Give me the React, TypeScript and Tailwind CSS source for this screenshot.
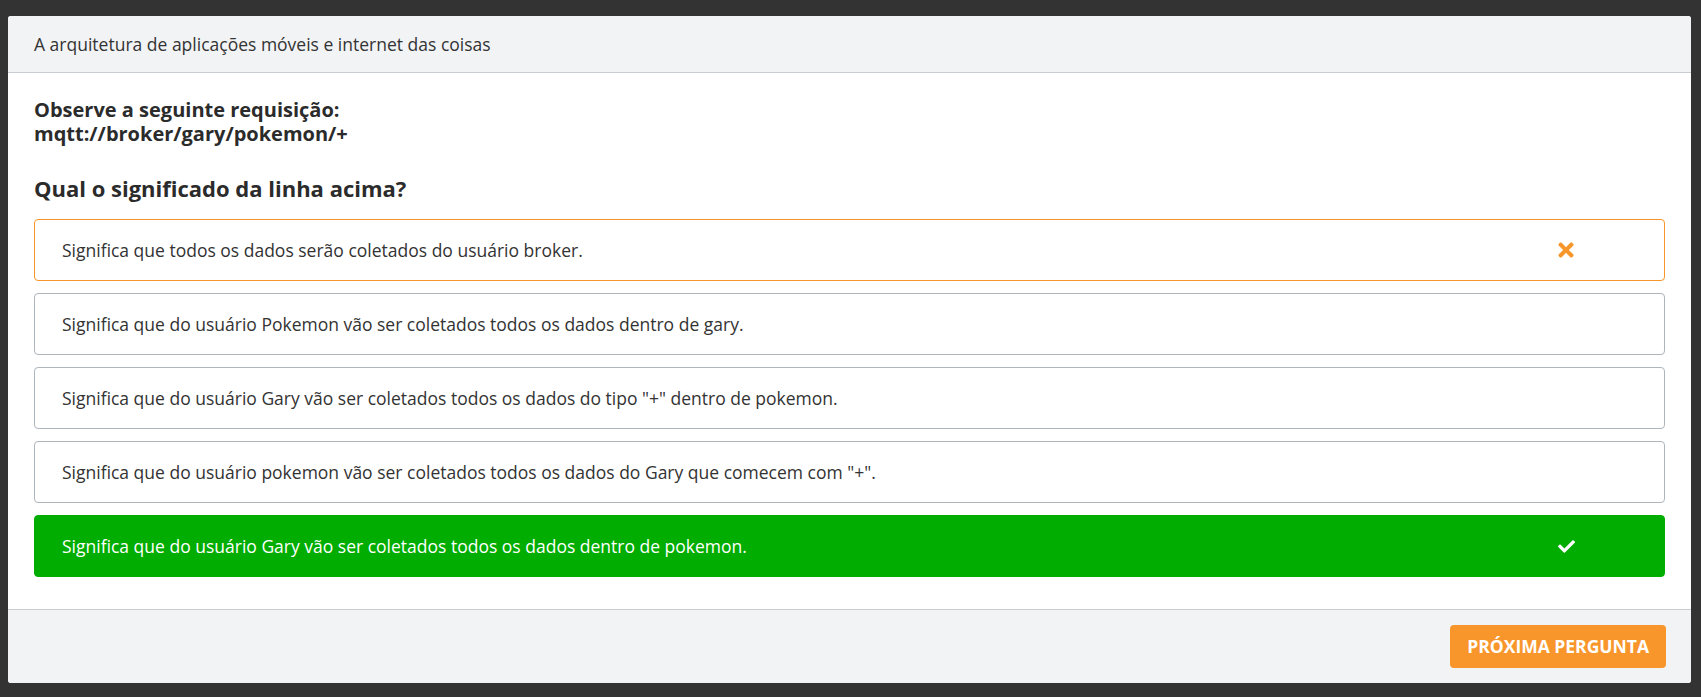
import { FaTimes, FaCheck } from "react-icons/fa";

type Option = {
  text: string;
  state: "wrong" | "right" | "idle";
};

const options: Option[] = [
  { text: "Significa que todos os dados serão coletados do usuário broker.", state: "wrong" },
  { text: "Significa que do usuário Pokemon vão ser coletados todos os dados dentro de gary.", state: "idle" },
  { text: 'Significa que do usuário Gary vão ser coletados todos os dados do tipo "+" dentro de pokemon.', state: "idle" },
  { text: 'Significa que do usuário pokemon vão ser coletados todos os dados do Gary que comecem com "+".', state: "idle" },
  { text: "Significa que do usuário Gary vão ser coletados todos os dados dentro de pokemon.", state: "right" },
];

function OptionRow({ option }: { option: Option }) {
  const base =
    "flex h-[62px] items-center justify-between rounded-[4px] border pl-[27px] pr-[87px] text-[17.5px]";
  const tone =
    option.state === "wrong"
      ? "border-[#f7962b] bg-white text-[#333]"
      : option.state === "right"
      ? "border-[#00ad00] bg-[#00ad00] text-white"
      : "border-[#adb5bd] bg-white text-[#333]";

  return (
    <div className={`${base} ${tone}`}>
      <span>{option.text}</span>
      <span className="flex w-[22px] justify-center">
        {option.state === "wrong" && <FaTimes size={22} className="text-[#f7962b]" />}
        {option.state === "right" && <FaCheck size={17} className="text-white" />}
      </span>
    </div>
  );
}

export default function App() {
  return (
    <div
      className="flex h-screen flex-col bg-[#333333] pt-[16px] pb-[14px] pl-[8px] pr-[10px]"
      style={{ fontFamily: '"Open Sans", "Noto Sans", sans-serif' }}
    >
      <div className="flex flex-1 flex-col overflow-hidden rounded-[3px] bg-white">
        {/* Header */}
        <div className="flex h-[57px] items-center border-b border-[#c9cdd2] bg-[#f2f3f5] px-[26px] text-[17.5px] text-[#333]">
          A arquitetura de aplicações móveis e internet das coisas
        </div>

        {/* Question + options */}
        <div className="flex-1 px-[26px] pt-[25px] pb-[32px]">
          <h2 className="text-[20px] font-bold leading-[24px] text-[#2b2b2b]">
            Observe a seguinte requisição:
            <br />
            mqtt://broker/gary/pokemon/+
          </h2>
          <h3 className="mt-[29px] text-[22px] font-bold leading-[26px] text-[#2b2b2b]">
            Qual o significado da linha acima?
          </h3>
          <div className="mt-[18px] flex flex-col gap-[12px]">
            {options.map((o) => (
              <OptionRow key={o.text} option={o} />
            ))}
          </div>
        </div>

        {/* Footer */}
        <div className="flex h-[74px] items-center justify-end border-t border-[#c9cdd2] bg-[#f2f3f5] px-[25px]">
          <button className="h-[43px] rounded-[4px] bg-[#f9962b] px-[17px] text-[17.5px] font-bold uppercase text-white">
            Próxima pergunta
          </button>
        </div>
      </div>
    </div>
  );
}
